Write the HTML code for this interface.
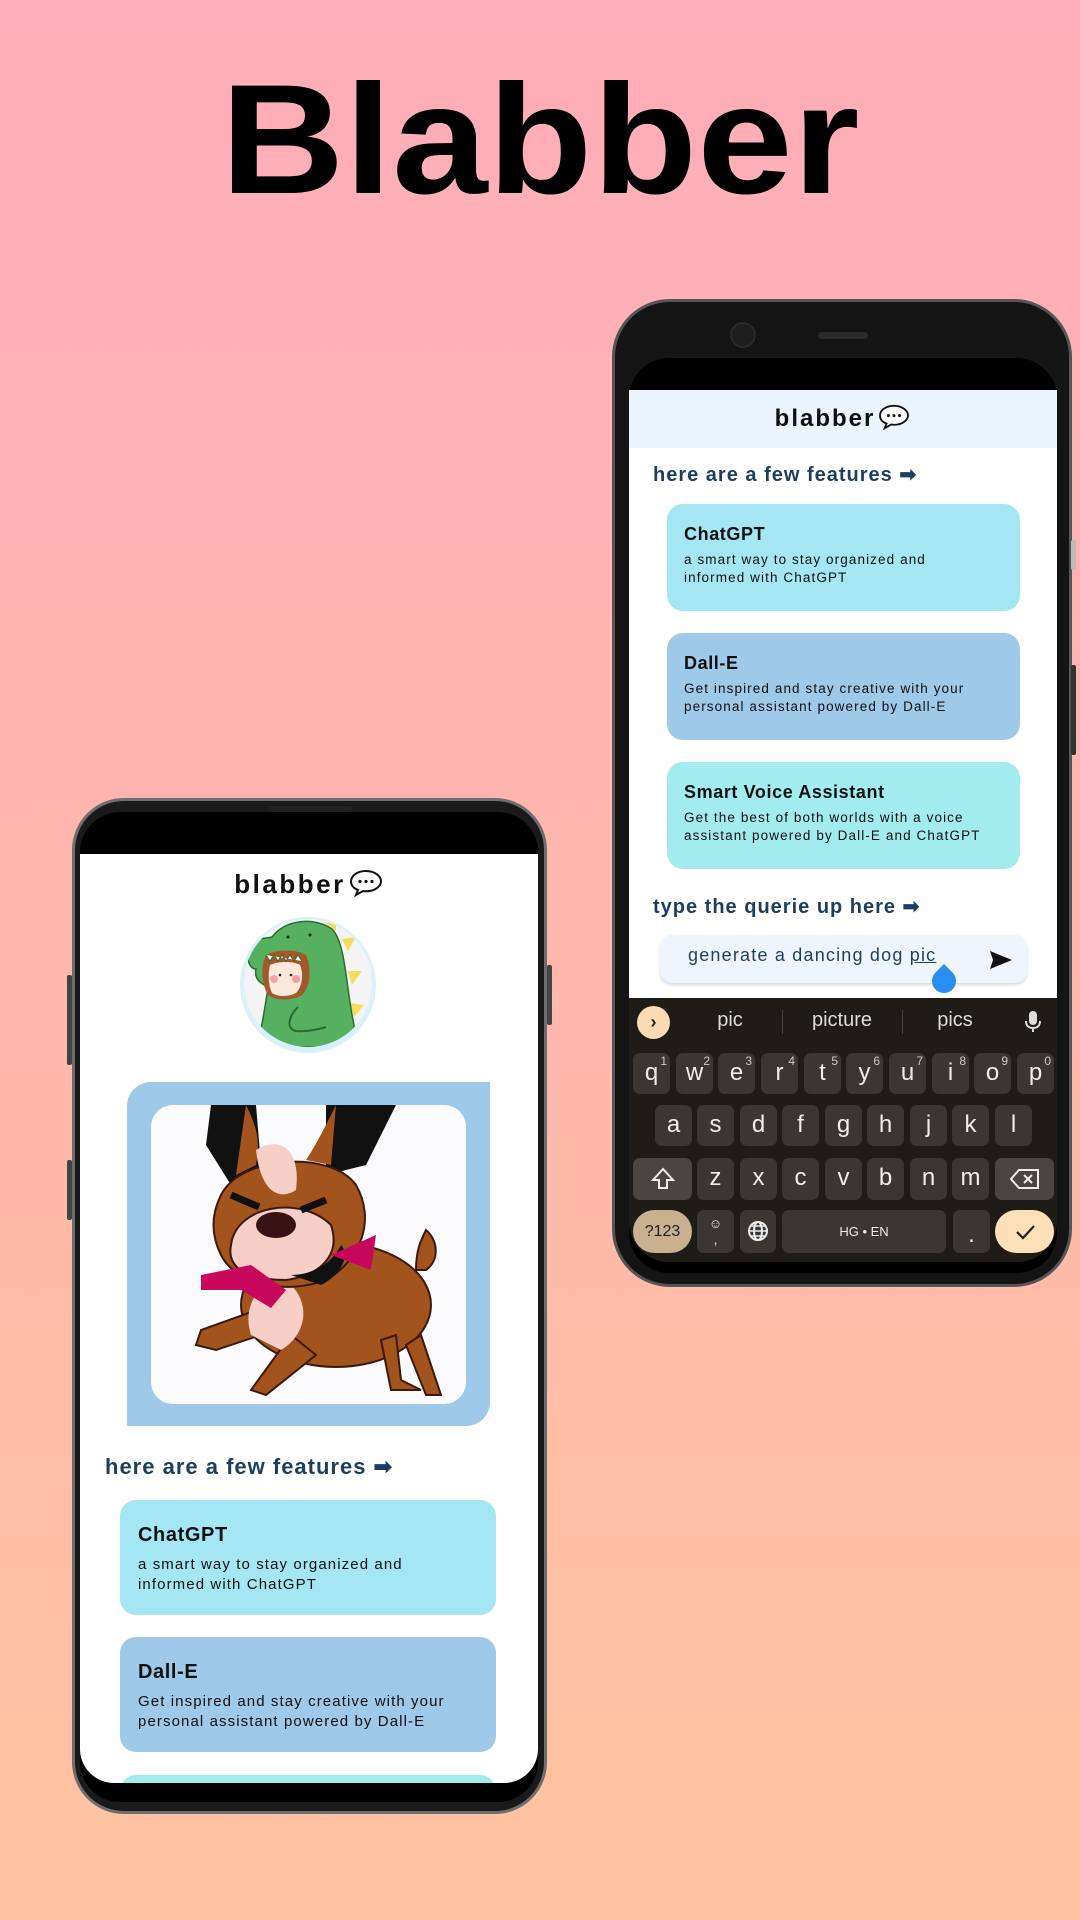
<!DOCTYPE html>
<html><head><meta charset="utf-8"><style>
*{margin:0;padding:0;box-sizing:border-box}
body{width:1080px;height:1920px;overflow:hidden;position:relative;background:linear-gradient(180deg,#ffadb9 0%,#ffb6ad 45%,#ffc3a0 100%);font-family:"Liberation Sans",sans-serif}
.a{position:absolute}
.title{left:0;width:1080px;top:50px;text-align:center;font-size:156px;font-weight:bold;color:#000;line-height:180px;transform:scaleX(1.1)}
.card{position:absolute;border-radius:16px;color:#111}
.card b{display:block;letter-spacing:.6px}
.card div{letter-spacing:1.1px}
.hd{position:absolute;color:#1c3f5f;font-weight:bold;letter-spacing:1px}
.k{position:absolute;background:#3b3631;border-radius:7px;color:#eee;font-size:24px;text-align:center;line-height:40px}
.k sup{position:absolute;right:3px;top:-12px;font-size:12px;color:#ccc}
</style></head><body>
<div class="a title">Blabber</div>

<!-- LEFT PHONE -->
<div class="a" style="left:72px;top:798px;width:475px;height:1016px;border-radius:52px;background:#1a1a1a;border:3px solid #6e6e6e"></div>
<div class="a" style="left:67px;top:975px;width:5px;height:90px;background:#444;border-radius:2px"></div>
<div class="a" style="left:67px;top:1160px;width:5px;height:60px;background:#444;border-radius:2px"></div>
<div class="a" style="left:547px;top:965px;width:5px;height:60px;background:#444;border-radius:2px"></div>
<div class="a" style="left:80px;top:812px;width:458px;height:990px;border-radius:40px;background:#000"></div>
<div class="a" style="left:268px;top:806px;width:84px;height:6px;border-radius:3px;background:#222"></div>
<div class="a" style="left:80px;top:854px;width:458px;height:929px;background:#fff;border-radius:0 0 34px 34px;overflow:hidden">
  <div class="a" style="left:0;width:458px;top:14px;text-align:center;font-size:26px;font-weight:bold;letter-spacing:2.5px;color:#111">blabber<svg width="36" height="30" viewBox="0 0 36 30" style="vertical-align:-5px;margin-left:2px"><path d="M18 3C9 3 3 8 3 13.5c0 4 3 7 7 8.5l-2 5 7-4c1 .2 2 .3 3 .3 9 0 15-5 15-10S27 3 18 3z" fill="#fff" stroke="#111" stroke-width="2"/><circle cx="12" cy="13.5" r="1.6" fill="#111"/><circle cx="18" cy="13.5" r="1.6" fill="#111"/><circle cx="24" cy="13.5" r="1.6" fill="#111"/></svg></div>
  <svg class="a" style="left:158px;top:61px" width="140" height="140" viewBox="0 0 140 140">
    <defs><clipPath id="cc"><circle cx="70" cy="68" r="64"/></clipPath></defs>
    <circle cx="70" cy="70" r="68" fill="#d9f1fa"/><circle cx="70" cy="68" r="64" fill="#f4f4f4"/>
    <g clip-path="url(#cc)">
    <path d="M88 8l10-4 0 12zM104 24l14-2-8 14zM110 56l14 0-10 14zM112 88l14 2-10 12z" fill="#f5dc5a"/>
    <path d="M10 30c6-8 18-6 24-8 14-18 42-20 60-8 14 14 14 60 22 96 0 10-6 18-14 22H20c4-24 8-44 10-60-8-4-14-8-12-18-6 0-10-8-8-24z" fill="#55b160" stroke="#2b6b32" stroke-width="1.5"/>
    <path d="M28 40c10-6 30-6 40 0 6 14 4 32-4 40-10 6-26 6-34 0-6-10-8-28-2-40z" fill="#a2582a"/>
    <path d="M32 50c8-4 24-4 30 0 4 10 2 22-4 28-8 4-18 4-24 0-4-8-4-20-2-28z" fill="#fde8dc"/>
    <path d="M28 40l4 6 4-6 4 6 4-6 4 6 4-6 4 6 4-6 4 6" fill="#fff" stroke="#2b6b32" stroke-width="1"/>
    <circle cx="36" cy="64" r="4" fill="#f6a0a6"/><circle cx="58" cy="64" r="4" fill="#f6a0a6"/>
    <circle cx="42" cy="60" r="1.3" fill="#222"/><circle cx="53" cy="60" r="1.3" fill="#222"/>
    <path d="M60 92c-10 10-12 22-2 24 10 1 24-2 30-4" fill="none" stroke="#2b6b32" stroke-width="2"/>
    <circle cx="50" cy="22" r="1.5" fill="#222"/><circle cx="72" cy="20" r="1.5" fill="#222"/>
    </g>
  </svg>
  <div class="a" style="left:47px;top:228px;width:363px;height:344px;background:#9ec9e9;border-radius:24px 0 24px 0"></div>
  <div class="a" style="left:71px;top:251px;width:315px;height:299px;background:#fbfbfd;border-radius:22px;overflow:hidden">
    <svg width="315" height="299" viewBox="0 0 315 299">
      <path d="M60 0h45l5 60-30 20L55 40zM175 0h70l-30 60-40 10z" fill="#111"/>
      <path d="M95 0c10 20 15 35 10 60l-20 10zM185 0c-10 20-20 40-30 55l25 5z" fill="#a3531c"/>
      <ellipse cx="185" cy="200" rx="95" ry="62" fill="#a3531c" stroke="#3a1a10" stroke-width="2"/>
      <path d="M265 165c0-20 5-30 10-40 12 10 14 30 0 40z" fill="#a3531c" stroke="#3a1a10" stroke-width="2"/>
      <path d="M120 200l-70 25-5 15 20 5 60-20zM140 230l-40 55 15 5 50-40zM230 235l10 50h30l-20-10-5-45zM270 230l20 60-15 0-20-50z" fill="#a3531c" stroke="#3a1a10" stroke-width="2"/>
      <path d="M100 230c-10-30 10-60 40-50 20 20 15 50-10 65z" fill="#f7cfc6"/>
      <path d="M70 90c20-40 110-45 135-10 20 35 5 75-30 95-40 15-90 5-105-25-10-20-10-40 0-60z" fill="#a3531c" stroke="#3a1a10" stroke-width="2"/>
      <path d="M105 45c25-15 45 0 40 40-15 10-35 5-40-40z" fill="#f7cfc6"/>
      <path d="M80 140c5-40 70-50 100-20 10 30-10 50-45 55-35 0-60-10-55-35z" fill="#f7cfc6" stroke="#3a1a10" stroke-width="2"/>
      <path d="M140 170c20 0 40-10 50-30 10 10 0 30-20 40z" fill="#111"/>
      <ellipse cx="125" cy="120" rx="20" ry="13" fill="#3a1216"/>
      <path d="M50 170l50-10 35 25-15 18-30-18-40 0zM180 150l45-20-5 35z" fill="#c8085c"/>
      <path d="M80 90l28 12M175 95l-25 10" stroke="#111" stroke-width="7"/>
    </svg>
  </div>
  <div class="hd" style="left:25px;top:600px;font-size:22px">here are a few features ➡</div>
  <div class="card" style="left:40px;top:646px;width:376px;height:115px;background:#a4e6f4;padding:24px 18px"><b style="font-size:20px">ChatGPT</b><div style="font-size:15px;margin-top:8px;line-height:20px">a smart way to stay organized and<br>informed with ChatGPT</div></div>
  <div class="card" style="left:40px;top:783px;width:376px;height:115px;background:#9ec9e9;padding:24px 18px"><b style="font-size:20px">Dall-E</b><div style="font-size:15px;margin-top:8px;line-height:20px">Get inspired and stay creative with your<br>personal assistant powered by Dall-E</div></div>
  <div class="card" style="left:40px;top:921px;width:376px;height:115px;background:#a2ebee"></div>
</div>

<!-- RIGHT PHONE -->
<div class="a" style="left:612px;top:299px;width:460px;height:988px;border-radius:58px;background:#141414;border:3px solid #555"></div>
<div class="a" style="left:1071px;top:540px;width:5px;height:30px;background:#bbb;border-radius:2px"></div>
<div class="a" style="left:1071px;top:665px;width:5px;height:90px;background:#333;border-radius:2px"></div>
<div class="a" style="left:730px;top:322px;width:26px;height:26px;border-radius:50%;background:#1e1e1e;border:2px solid #2a2a2a"></div>
<div class="a" style="left:818px;top:332px;width:50px;height:7px;border-radius:4px;background:#2a2a2a"></div>
<div class="a" style="left:629px;top:358px;width:428px;height:915px;border-radius:40px 40px 40px 40px;background:#000"></div>
<div class="a" style="left:629px;top:390px;width:428px;height:608px;background:#fff;overflow:hidden">
  <div class="a" style="left:0;top:0;width:428px;height:58px;background:#ebf4fe"></div>
  <div class="a" style="left:0;width:428px;top:13px;text-align:center;font-size:24px;font-weight:bold;letter-spacing:2px;color:#111">blabber<svg width="34" height="28" viewBox="0 0 36 30" style="vertical-align:-5px;margin-left:2px"><path d="M18 3C9 3 3 8 3 13.5c0 4 3 7 7 8.5l-2 5 7-4c1 .2 2 .3 3 .3 9 0 15-5 15-10S27 3 18 3z" fill="#fff" stroke="#111" stroke-width="2"/><circle cx="12" cy="13.5" r="1.6" fill="#111"/><circle cx="18" cy="13.5" r="1.6" fill="#111"/><circle cx="24" cy="13.5" r="1.6" fill="#111"/></svg></div>
  <div class="hd" style="left:24px;top:72px;font-size:20px">here are a few features ➡</div>
  <div class="card" style="left:38px;top:114px;width:353px;height:107px;background:#a4e6f4;padding:20px 17px"><b style="font-size:18px">ChatGPT</b><div style="font-size:13.5px;margin-top:6px;line-height:18px">a smart way to stay organized and<br>informed with ChatGPT</div></div>
  <div class="card" style="left:38px;top:243px;width:353px;height:107px;background:#9ec9e9;padding:20px 17px"><b style="font-size:18px">Dall-E</b><div style="font-size:13.5px;margin-top:6px;line-height:18px">Get inspired and stay creative with your<br>personal assistant powered by Dall-E</div></div>
  <div class="card" style="left:38px;top:372px;width:353px;height:107px;background:#a2ebee;padding:20px 17px"><b style="font-size:18px">Smart Voice Assistant</b><div style="font-size:13.5px;margin-top:6px;line-height:18px">Get the best of both worlds with a voice<br>assistant powered by Dall-E and ChatGPT</div></div>
  <div class="hd" style="left:24px;top:504px;font-size:20px">type the querie up here ➡</div>
  <div class="a" style="left:31px;top:545px;width:367px;height:48px;background:#eef5fc;border-radius:12px;box-shadow:0 2px 3px rgba(0,0,0,.15)"></div>
  <div class="a" style="left:59px;top:555px;font-size:18px;color:#1c3f5f;letter-spacing:1.2px">generate a dancing dog <u>pic</u></div>
  <svg class="a" style="left:359px;top:559px" width="26" height="22" viewBox="0 0 26 22"><path d="M2 2l22 9-22 9 3-9z" fill="#111"/></svg>
  <div class="a" style="left:303px;top:579px;width:24px;height:24px;background:#2a8ef0;border-radius:50% 0 50% 50%;transform:rotate(-45deg)"></div>
</div>
<!-- keyboard -->
<div class="a" style="left:629px;top:998px;width:428px;height:264px;background:#1f1b17;border-radius:0 0 40px 40px"></div>
<div class="a" style="left:637px;top:1006px;width:33px;height:33px;border-radius:50%;background:#fbdcb2;text-align:center;line-height:32px;font-size:18px;font-weight:bold;color:#222">›</div>
<div class="a" style="left:680px;top:1009px;width:100px;text-align:center;color:#ddd;font-size:20px">pic</div>
<div class="a" style="left:782px;top:1010px;width:1px;height:24px;background:#444"></div>
<div class="a" style="left:792px;top:1009px;width:100px;text-align:center;color:#ddd;font-size:20px">picture</div>
<div class="a" style="left:902px;top:1010px;width:1px;height:24px;background:#444"></div>
<div class="a" style="left:905px;top:1009px;width:100px;text-align:center;color:#ddd;font-size:20px">pics</div>
<svg class="a" style="left:1024px;top:1010px" width="18" height="24" viewBox="0 0 18 24"><rect x="5" y="1" width="8" height="14" rx="4" fill="#ddd"/><path d="M2 11c0 5 3 7 7 7s7-2 7-7M9 18v4" stroke="#ddd" stroke-width="2" fill="none"/></svg>
<div class="k" style="left:633px;top:1053px;width:37px;height:41px">q<sup>1</sup></div>
<div class="k" style="left:676px;top:1053px;width:37px;height:41px">w<sup>2</sup></div>
<div class="k" style="left:718px;top:1053px;width:37px;height:41px">e<sup>3</sup></div>
<div class="k" style="left:761px;top:1053px;width:37px;height:41px">r<sup>4</sup></div>
<div class="k" style="left:804px;top:1053px;width:37px;height:41px">t<sup>5</sup></div>
<div class="k" style="left:846px;top:1053px;width:37px;height:41px">y<sup>6</sup></div>
<div class="k" style="left:889px;top:1053px;width:37px;height:41px">u<sup>7</sup></div>
<div class="k" style="left:932px;top:1053px;width:37px;height:41px">i<sup>8</sup></div>
<div class="k" style="left:974px;top:1053px;width:37px;height:41px">o<sup>9</sup></div>
<div class="k" style="left:1017px;top:1053px;width:37px;height:41px">p<sup>0</sup></div>
<div class="k" style="left:655px;top:1105px;width:37px;height:41px">a</div>
<div class="k" style="left:697px;top:1105px;width:37px;height:41px">s</div>
<div class="k" style="left:740px;top:1105px;width:37px;height:41px">d</div>
<div class="k" style="left:782px;top:1105px;width:37px;height:41px">f</div>
<div class="k" style="left:825px;top:1105px;width:37px;height:41px">g</div>
<div class="k" style="left:867px;top:1105px;width:37px;height:41px">h</div>
<div class="k" style="left:910px;top:1105px;width:37px;height:41px">j</div>
<div class="k" style="left:952px;top:1105px;width:37px;height:41px">k</div>
<div class="k" style="left:995px;top:1105px;width:37px;height:41px">l</div>
<div class="k" style="left:633px;top:1158px;width:59px;height:42px;background:#4a4540"><svg width="26" height="24" viewBox="0 0 26 24" style="margin-top:9px"><path d="M13 2L3 13h6v8h8v-8h6z" fill="none" stroke="#eee" stroke-width="2"/></svg></div>
<div class="k" style="left:697px;top:1158px;width:37px;height:42px">z</div>
<div class="k" style="left:740px;top:1158px;width:37px;height:42px">x</div>
<div class="k" style="left:782px;top:1158px;width:37px;height:42px">c</div>
<div class="k" style="left:825px;top:1158px;width:37px;height:42px">v</div>
<div class="k" style="left:867px;top:1158px;width:37px;height:42px">b</div>
<div class="k" style="left:910px;top:1158px;width:37px;height:42px">n</div>
<div class="k" style="left:952px;top:1158px;width:37px;height:42px">m</div>
<div class="k" style="left:995px;top:1158px;width:59px;height:42px;background:#4a4540"><svg width="30" height="22" viewBox="0 0 30 22" style="margin-top:10px"><path d="M9 2h19v18H9L1 11z" fill="none" stroke="#eee" stroke-width="2"/><path d="M14 7l8 8M22 7l-8 8" stroke="#eee" stroke-width="2"/></svg></div>
<div class="k" style="left:633px;top:1210px;width:59px;height:43px;background:#c9b08f;color:#222;border-radius:22px;font-size:16px;line-height:43px">?123</div>
<div class="k" style="left:697px;top:1210px;width:37px;height:43px;font-size:13px;line-height:16px;padding-top:6px">☺<br>,</div>
<div class="k" style="left:740px;top:1210px;width:36px;height:43px"><svg width="22" height="22" viewBox="0 0 22 22" style="margin-top:10px"><circle cx="11" cy="11" r="9" fill="none" stroke="#eee" stroke-width="2"/><ellipse cx="11" cy="11" rx="4" ry="9" fill="none" stroke="#eee" stroke-width="2"/><path d="M2 11h18M4 6h14M4 16h14" stroke="#eee" stroke-width="1.5"/></svg></div>
<div class="k" style="left:782px;top:1210px;width:164px;height:43px;font-size:13px;line-height:43px">HG • EN</div>
<div class="k" style="left:953px;top:1210px;width:37px;height:43px;line-height:50px">.</div>
<div class="k" style="left:995px;top:1210px;width:59px;height:43px;background:#fddfb8;border-radius:22px"><svg width="22" height="18" viewBox="0 0 22 18" style="margin-top:13px"><path d="M3 9l6 6L20 3" fill="none" stroke="#222" stroke-width="2.2"/></svg></div>
</body></html>
